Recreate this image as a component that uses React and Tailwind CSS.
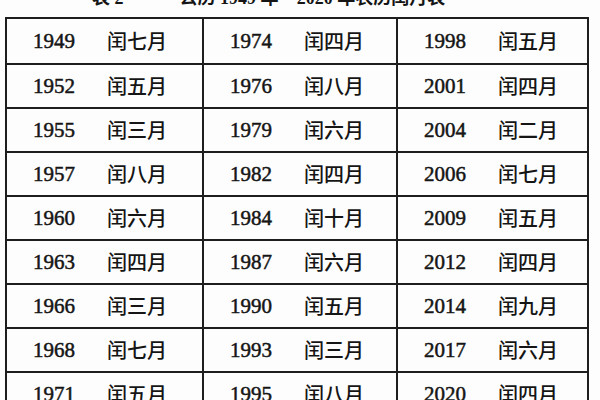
const rows = [
  [['1949', '闰七月'], ['1974', '闰四月'], ['1998', '闰五月']],
  [['1952', '闰五月'], ['1976', '闰八月'], ['2001', '闰四月']],
  [['1955', '闰三月'], ['1979', '闰六月'], ['2004', '闰二月']],
  [['1957', '闰八月'], ['1982', '闰四月'], ['2006', '闰七月']],
  [['1960', '闰六月'], ['1984', '闰十月'], ['2009', '闰五月']],
  [['1963', '闰四月'], ['1987', '闰六月'], ['2012', '闰四月']],
  [['1966', '闰三月'], ['1990', '闰五月'], ['2014', '闰九月']],
  [['1968', '闰七月'], ['1993', '闰三月'], ['2017', '闰六月']],
  [['1971', '闰五月'], ['1995', '闰八月'], ['2020', '闰四月']],
]

function Cell({ year, month, first }) {
  return (
    <div className={`flex items-center h-full pl-[26px] ${first ? '' : 'border-l-2 border-[#1e1e1e]'}`}>
      <span className="w-[74px] text-[21px] leading-none font-['Liberation_Serif',serif] [-webkit-text-stroke:0.5px_#151515]">{year}</span>
      <span className="text-[20px] leading-none font-medium font-['Noto_Sans_CJK_SC',sans-serif]">{month}</span>
    </div>
  )
}

export default function App() {
  return (
    <div className="w-[600px] h-[400px] overflow-hidden bg-[#fdfdfd] text-[#151515]">
      <div className="-mt-[11px] h-[28px] flex items-start text-[18px] leading-[18px] font-bold font-['Liberation_Serif','Noto_Sans_CJK_SC',serif]">
        <span className="ml-[92px]">表 2</span>
        <span className="ml-[56px]">公历 1949 年 ~ 2020 年农历闰月表</span>
      </div>
      <div className="ml-[5px] w-[584px] border-2 border-[#1e1e1e]">
        {rows.map((row, i) => (
          <div
            key={i}
            className={`grid grid-cols-[195px_194px_191px] h-[44px] ${i === 0 ? 'h-[42px]' : 'border-t-2 border-[#1e1e1e]'}`}
          >
            {row.map(([year, month], j) => (
              <Cell key={year} year={year} month={month} first={j === 0} />
            ))}
          </div>
        ))}
      </div>
    </div>
  )
}
